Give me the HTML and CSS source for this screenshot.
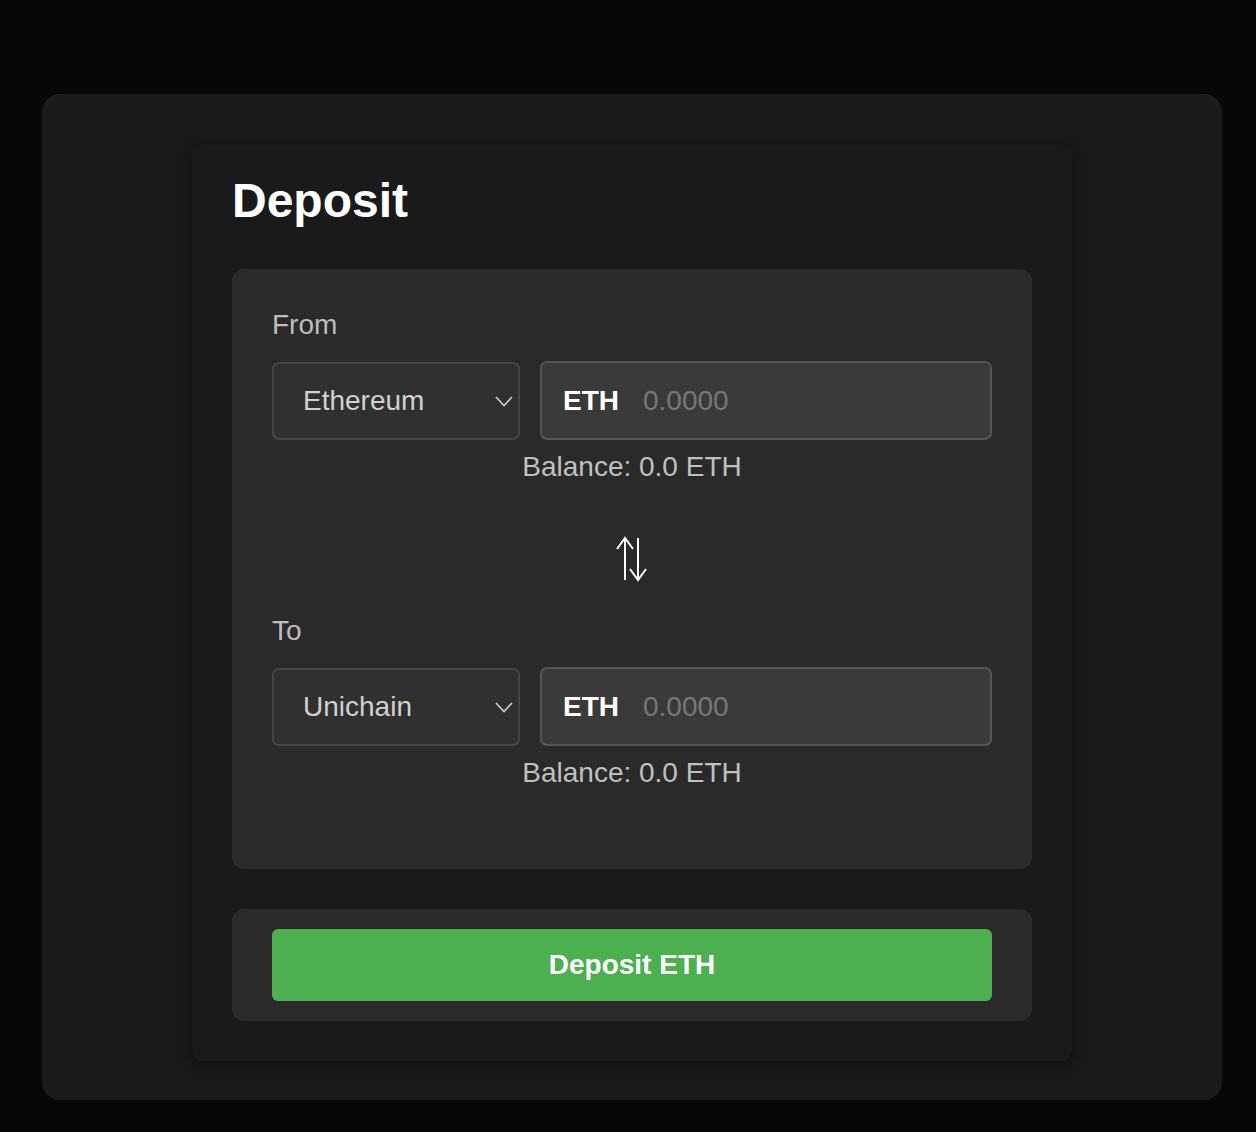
FILE: index.html
```html
<!DOCTYPE html>
<html lang="en">
<head>
<meta charset="utf-8">
<title>Deposit</title>
<link rel="stylesheet" href="styles.css">
</head>
<body>
<div class="frame">
  <div class="card">
    <h1 class="title">Deposit</h1>
    <div class="panel">
      <div class="section">
        <div class="label">From</div>
        <div class="row">
          <div class="select-wrap">
            <select class="select"><option>Ethereum</option><option>Unichain</option></select>
            <svg class="chevron" width="18" height="11" viewBox="0 0 18 11"><path d="M1 1 L9 9.5 L17 1" fill="none" stroke="#cfcfcf" stroke-width="1.6"/></svg>
          </div>
          <div class="amount">
            <span class="token">ETH</span>
            <input class="amount-input" type="text" placeholder="0.0000">
          </div>
        </div>
        <div class="balance">Balance: 0.0 ETH</div>
      </div>
      <div class="swap">
        <svg width="32" height="46" viewBox="0 0 32 46">
          <path d="M9 2 V44 M1 13 L9 2 L17 13" fill="none" stroke="#fff" stroke-width="2"/>
          <path d="M22 2 V44 M14 33 L22 44 L30 33" fill="none" stroke="#fff" stroke-width="2"/>
        </svg>
      </div>
      <div class="section section-last">
        <div class="label">To</div>
        <div class="row">
          <div class="select-wrap">
            <select class="select"><option>Unichain</option><option>Ethereum</option></select>
            <svg class="chevron" width="18" height="11" viewBox="0 0 18 11"><path d="M1 1 L9 9.5 L17 1" fill="none" stroke="#cfcfcf" stroke-width="1.6"/></svg>
          </div>
          <div class="amount">
            <span class="token">ETH</span>
            <input class="amount-input" type="text" placeholder="0.0000">
          </div>
        </div>
        <div class="balance">Balance: 0.0 ETH</div>
      </div>
    </div>
    <div class="action-panel">
      <button class="deposit-btn" type="button">Deposit ETH</button>
    </div>
  </div>
</div>
</body>
</html>
```
FILE: styles.css
```css
* { box-sizing: border-box; }
html, body { margin: 0; padding: 0; }
body {
  background: #070707;
  font-family: "Liberation Sans", Arial, sans-serif;
  color: #fff;
}
.frame {
  margin: 94px 34px 0 42px;
  width: 1180px;
  height: 1006px;
  background: #1a1a1a;
  border-radius: 18px;
  padding-top: 51px;
}
.card {
  width: 880px;
  margin: 0 auto;
  background: #1a1a1a;
  border-radius: 12px;
  box-shadow: 0 4px 14px rgba(0,0,0,0.45);
  padding: 29px 40px 40px;
}
.title {
  margin: 0 0 41px;
  font-size: 48px;
  line-height: 54px;
  font-weight: 700;
  color: #fff;
}
.panel {
  background: #2a2a2a;
  border-radius: 12px;
  padding: 40px 40px 40px;
}
.label {
  font-size: 28px;
  line-height: 32px;
  color: #bdbdbd;
  margin-bottom: 20px;
}
.row {
  display: flex;
  gap: 20px;
  align-items: center;
}
.select-wrap {
  position: relative;
  width: 248px;
  flex: none;
}
.select {
  appearance: none;
  -webkit-appearance: none;
  width: 100%;
  height: 78px;
  background: #303030;
  border: 2px solid #464646;
  border-radius: 7px;
  color: #d0d0d0;
  font-family: inherit;
  font-size: 28px;
  padding: 0 40px 0 29px;
  outline: none;
}
.chevron {
  position: absolute;
  right: 7px;
  top: 34px;
  pointer-events: none;
}
.amount {
  flex: 1 1 0;
  min-width: 0;
  height: 79px;
  display: flex;
  align-items: center;
  background: #3a3a3a;
  border: 2px solid #555;
  border-radius: 7px;
  padding-left: 21px;
}
.token {
  font-size: 28px;
  font-weight: 700;
  color: #fff;
  margin-right: 24px;
}
.amount-input {
  flex: 1 1 0;
  min-width: 0;
  width: 0;
  background: transparent;
  border: none;
  outline: none;
  color: #fff;
  font-family: inherit;
  font-size: 28px;
  padding: 0;
}
.amount-input::placeholder { color: #777; }
.balance {
  text-align: center;
  font-size: 28px;
  line-height: 32px;
  color: #c0c0c0;
  margin-top: 11px;
}
.swap {
  display: flex;
  justify-content: center;
  padding: 53px 0 33px;
}
.swap svg { display: block; }
.section-last { padding-bottom: 40px; }
.action-panel {
  margin-top: 40px;
  background: #2a2a2a;
  border-radius: 12px;
  padding: 20px 40px;
}
.deposit-btn {
  display: block;
  width: 100%;
  height: 72px;
  background: #4caf50;
  border: none;
  border-radius: 6px;
  color: #fff;
  font-family: inherit;
  font-size: 28px;
  font-weight: 700;
}
```
